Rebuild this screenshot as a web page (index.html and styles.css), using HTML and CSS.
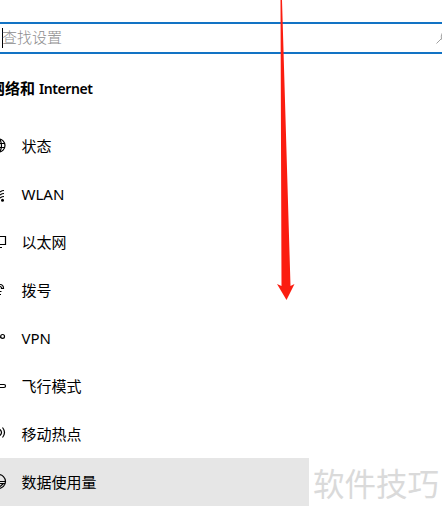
FILE: index.html
```
<!DOCTYPE html>
<html lang="zh-CN">

<head>
    <meta charset="UTF-8">
    <title>网络和 Internet</title>
    <link rel="stylesheet" href="styles.css">
</head>

<body>
    <div class="search">
        <span class="caret"></span>
        <span class="placeholder">查找设置</span>
        <svg class="search-icon" width="6" height="14" viewBox="0 0 6 14">
            <path d="M0.5 12.5L5 8M6.5 1.5Q4.5 5 5.5 8.5" />
        </svg>
    </div>

    <h1>网络和 <span>Internet</span></h1>

    <ul class="nav">
        <li>
            <svg class="icon" viewBox="0 0 8 20">
                <circle cx="-1.5" cy="9.5" r="6.5" />
                <path d="M0 3.5Q3 9.5 0 15.5M0 7.5H5M0 11.5H5" />
            </svg>
            状态
        </li>
        <li>
            <svg class="icon" viewBox="0 0 8 20">
                <path d="M0 8Q2 6.5 4 6.5M0 11Q2 9.5 4 9.5M0 14Q2 12.5 4 12.5" />
                <circle class="dot" cx="2.5" cy="16.3" r="1.5" />
            </svg>
            WLAN
        </li>
        <li>
            <svg class="icon" viewBox="0 0 8 20">
                <path d="M0 4.5H5.5V12.5H0M0 15.5H2" />
            </svg>
            以太网
        </li>
        <li>
            <svg class="icon" viewBox="0 0 8 20">
                <path d="M0 4.5Q3.5 4.5 3.5 8.5H1.5Q1.5 6.5 0 6.5M0 11.5H1.5M0 14.5H1" />
            </svg>
            拨号
        </li>
        <li>
            <svg class="icon" viewBox="0 0 8 20">
                <circle cx="2.6" cy="8.4" r="1.9" />
                <path d="M0 9.5L1 9" />
            </svg>
            VPN
        </li>
        <li>
            <svg class="icon" viewBox="0 0 8 20">
                <path d="M0 8.5H4Q5.5 8.5 5.5 10T4 11.5H0" />
            </svg>
            飞行模式
        </li>
        <li>
            <svg class="icon" viewBox="0 0 8 20">
                <path d="M0 5.5Q3 8.5 0 11.5M2.5 3.5Q6.5 8.5 2.5 13.5" />
            </svg>
            移动热点
        </li>
        <li class="active">
            <svg class="icon" viewBox="0 0 8 20">
                <circle cx="-1.5" cy="9.5" r="7" />
                <path d="M0 9.5H5.5M0 11.5H5M0 14.5L3.5 11.5" />
            </svg>
            数据使用量
        </li>
    </ul>

    <div class="watermark">软件技巧</div>

    <svg class="arrow" width="20" height="302" viewBox="0 0 20 302">
        <path d="M4.5 0H6L14.5 286L18.5 284L10.5 300L1 284L5.5 286Z" />
    </svg>
</body>

</html>
```

FILE: styles.css
```
body {
    margin: 0;
    height: 517px;
    position: relative;
    overflow: hidden;
    background: #fff;
    color: #000;
    font-family: "Noto Sans", "Noto Sans CJK SC", sans-serif;
    font-size: 15px;
}

.search {
    display: flex;
    align-items: center;
    box-sizing: border-box;
    height: 32px;
    margin-top: 22px;
    padding-left: 2px;
    border-top: 2px solid #1273c4;
    border-bottom: 2px solid #1273c4;
}

.caret {
    width: 1px;
    height: 20px;
    background: #000;
}

.placeholder {
    margin-left: -1px;
    padding-bottom: 2px;
    color: #8c8c8c;
    font-family: "Noto Sans CJK SC", sans-serif;
    font-weight: 300;
    line-height: 26px;
}

.search-icon {
    margin-left: auto;
    fill: none;
    stroke: #a0a0a0;
}

h1 {
    margin: 22px 0 0 -10px;
    font-size: 15px;
    line-height: 24px;
    font-weight: 700;
    white-space: nowrap;
}

h1 span {
    font-family: "Noto Sans", sans-serif;
    font-size: 14px;
    font-weight: 600;
    letter-spacing: -0.4px;
}

.nav {
    margin: 21px 0 0;
    padding: 0;
    width: 309px;
    list-style: none;
}

.nav li {
    display: flex;
    align-items: center;
    gap: 13.5px;
    height: 48px;
    line-height: 20px;
}

.nav .active {
    background: #e6e6e6;
}

.icon {
    width: 8px;
    height: 20px;
    flex: none;
    fill: none;
    stroke: #000;
    stroke-width: 1.2;
}

.icon .dot {
    fill: #000;
    stroke: none;
}

.watermark {
    position: absolute;
    left: 313px;
    top: 462px;
    color: #dadada;
    font-family: "Noto Sans CJK SC", sans-serif;
    font-size: 31.5px;
    line-height: 40px;
    font-weight: 400;
    white-space: nowrap;
}

.arrow {
    position: absolute;
    left: 276px;
    top: 0;
    fill: #fb1d10;
}
```
